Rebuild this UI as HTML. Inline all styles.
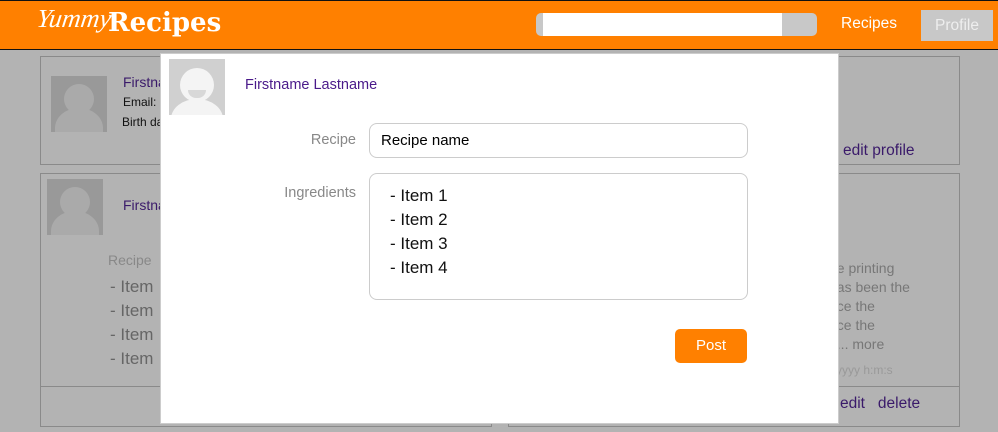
<!DOCTYPE html>
<html><head><meta charset="utf-8"><style>
*{margin:0;padding:0;box-sizing:border-box}
body{width:998px;height:432px;overflow:hidden;background:#b3b3b3;font-family:"Liberation Sans",sans-serif;position:relative}
.hdr{position:absolute;left:0;top:0;width:998px;height:50px;background:#ff8000;border-top:1px solid #111;border-bottom:1px solid #111}
.a{position:absolute}
.card{position:absolute;border:1px solid #8a8a8a}
.av{position:absolute;overflow:hidden}
.av .h{position:absolute;border-radius:50%}
.av .b{position:absolute;border-radius:50% 50% 0 0}
.pur{color:#3a1a6a}
.lbl{position:absolute;width:120px;text-align:right;font-size:14.5px;color:#888}
</style></head><body>
<div class="hdr">
 <div class="a" style="left:37px;top:3px;color:#fff;font-family:'Liberation Serif',serif;font-style:italic;font-size:26px;transform:skewX(-8deg)">Yummy</div>
 <div class="a" style="left:108px;top:7px;color:#fff;font-family:'DejaVu Serif',serif;font-weight:bold;font-size:26px">Recipes</div>
 <div class="a" style="left:536px;top:12px;width:281px;height:23px;background:#c8c8c8;border-radius:5px"></div>
 <div class="a" style="left:543px;top:12px;width:239px;height:23px;background:#fff"></div>
 <div class="a" style="left:841px;top:14px;color:#fff;font-size:15.5px">Recipes</div>
 <div class="a" style="left:921px;top:9px;width:72px;height:31px;background:#c8c8c8;color:#eee;font-size:15.5px;text-align:center;line-height:31px">Profile</div>
</div>
<!-- left cards -->
<div class="card" style="left:40px;top:56px;width:452px;height:109px"></div>
<div class="av" style="left:51px;top:76px;width:56px;height:56px;background:#999"><div class="h" style="left:13px;top:8px;width:30px;height:30px;background:#aaa"></div><div class="b" style="left:4px;top:32px;width:48px;height:40px;background:#aaa"></div></div>
<div class="a pur" style="left:123px;top:74px;font-size:14px">Firstname</div>
<div class="a" style="left:123px;top:95px;font-size:12px;color:#111">Email:</div>
<div class="a" style="left:122px;top:115px;font-size:12px;color:#111">Birth date</div>
<div class="card" style="left:40px;top:173px;width:452px;height:254px"></div>
<div class="a" style="left:41px;top:386px;width:450px;height:1px;background:#8a8a8a"></div>
<div class="av" style="left:47px;top:179px;width:56px;height:56px;background:#999"><div class="h" style="left:13px;top:8px;width:30px;height:30px;background:#aaa"></div><div class="b" style="left:4px;top:32px;width:48px;height:40px;background:#aaa"></div></div>
<div class="a pur" style="left:123px;top:197px;font-size:14px">Firstname</div>
<div class="a" style="left:108px;top:252px;font-size:14px;color:#888">Recipe</div>
<div class="a" style="left:110px;top:275px;font-size:17px;color:#666;line-height:24px">- Item<br>- Item<br>- Item<br>- Item</div>
<!-- right cards -->
<div class="card" style="left:508px;top:56px;width:452px;height:109px"></div>
<div class="a pur" style="left:843px;top:142px;font-size:15.5px">edit profile</div>
<div class="card" style="left:508px;top:173px;width:452px;height:254px"></div>
<div class="a" style="left:509px;top:386px;width:450px;height:1px;background:#8a8a8a"></div>
<div class="a" style="left:829px;top:259px;font-size:14px;color:#777;line-height:19px;white-space:nowrap">he printing<br>has been the<br>nce the<br>nce the<br>n... more</div>
<div class="a" style="left:822px;top:363px;font-size:12px;color:#999">m-yyyy h:m:s</div>
<div class="a pur" style="left:840px;top:395px;font-size:15.5px">edit&nbsp;&nbsp; delete</div>
<!-- modal -->
<div class="a" style="left:160px;top:53px;width:679px;height:371px;background:#fff;border:1px solid #ccc"></div>
<div class="av" style="left:169px;top:59px;width:56px;height:56px;background:#d0d0d0"><div class="h" style="left:11px;top:9px;width:34px;height:34px;background:#f4f4f4"></div><div class="h" style="left:19px;top:31px;width:18px;height:8px;background:#d8d8d8;border-radius:0 0 9px 9px"></div><div class="b" style="left:2px;top:40px;width:52px;height:40px;background:#f4f4f4"></div></div>
<div class="a" style="left:245px;top:77px;font-size:14.5px;color:#4a1a8a">Firstname Lastname</div>
<div class="lbl" style="left:236px;top:132px">Recipe</div>
<div class="a" style="left:369px;top:123px;width:379px;height:35px;border:1px solid #ccc;border-radius:8px;font-size:15px;color:#000;padding:8px 0 0 11px">Recipe name</div>
<div class="lbl" style="left:236px;top:185px">Ingredients</div>
<div class="a" style="left:369px;top:173px;width:379px;height:127px;border:1px solid #ccc;border-radius:8px;font-size:17px;color:#111;padding:10px 0 0 20px;line-height:24px">- Item 1<br>- Item 2<br>- Item 3<br>- Item 4</div>
<div class="a" style="left:675px;top:329px;width:72px;height:34px;background:#ff8000;border-radius:5px;color:#fff;font-size:15px;text-align:center;line-height:33px">Post</div>
</body></html>
